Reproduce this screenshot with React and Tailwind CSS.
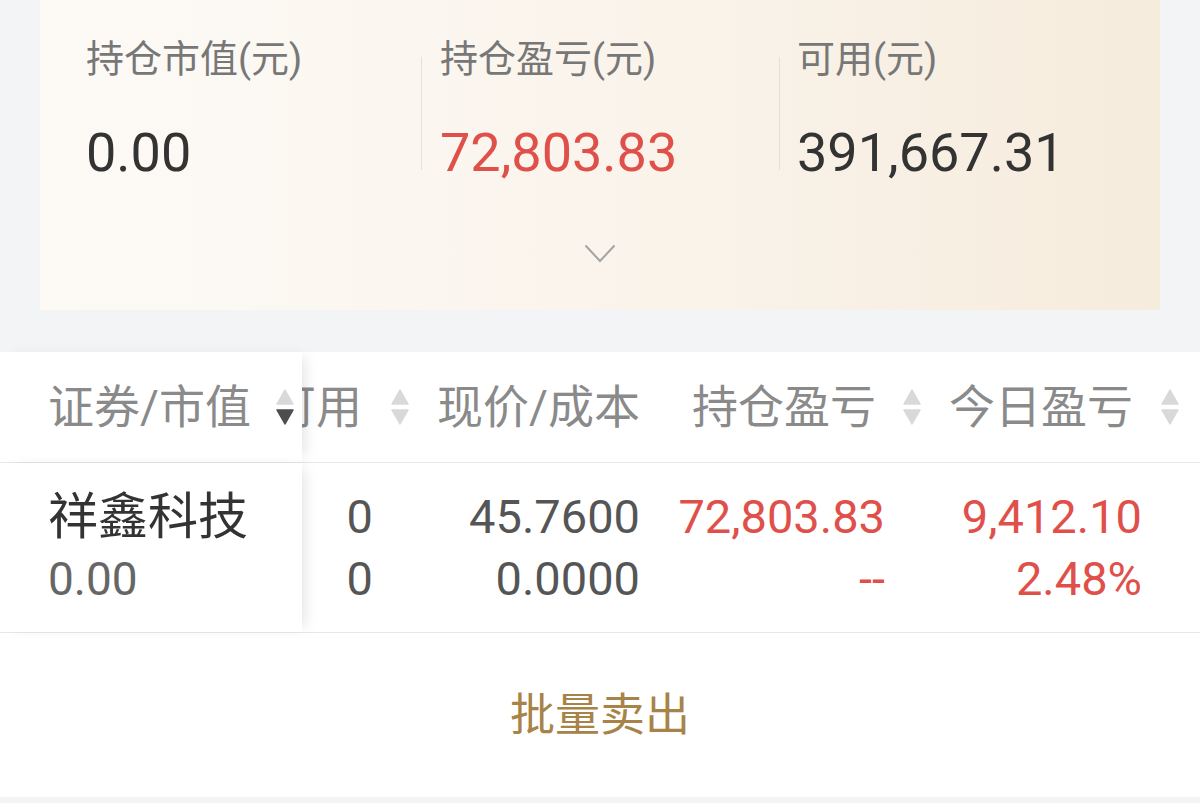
import React from 'react'

const SortIcon = ({ active }) => (
  <svg width="20" height="38" viewBox="0 0 20 38" className="shrink-0">
    <path d="M10 2 L18 16 L2 16 Z" fill="#d9d9d9" strokeLinejoin="round" stroke="#d9d9d9" strokeWidth="1.5" />
    <path
      d="M2 22 L18 22 L10 36 Z"
      fill={active ? '#4d4d4d' : '#d9d9d9'}
      stroke={active ? '#4d4d4d' : '#d9d9d9'}
      strokeLinejoin="round"
      strokeWidth="1.5"
    />
  </svg>
)

const App = () => {
  const summary = [
    { label: '持仓市值(元)', value: '0.00', red: false },
    { label: '持仓盈亏(元)', value: '72,803.83', red: true },
    { label: '可用(元)', value: '391,667.31', red: false }
  ]

  return (
    <div className="w-[1200px] h-[803px] overflow-hidden bg-[#f3f4f6] font-['Roboto','Noto_Sans_CJK_SC',sans-serif]">
      {/* Asset card */}
      <div className="mx-10 h-[310px] bg-gradient-to-r from-[#fdfaf6] via-[#faf4ec] to-[#f6ecdd] pt-10 pl-[46px]">
        <div className="flex">
          {summary.map((item, i) => (
            <div key={item.label} className="flex">
              {i > 0 && <div className="w-px h-[113px] mt-[17px] bg-[#e6e0d6]" />}
              <div className={i === 0 ? 'w-[335px]' : i === 1 ? 'w-[357px] pl-[18px]' : 'pl-[17px]'}>
                <div className="text-[38px] leading-[38px] text-[#777]">{item.label}</div>
                <div
                  className={`mt-[48px] text-[54px] leading-none ${
                    item.red ? 'text-[#e0504b]' : 'text-[#333]'
                  }`}
                >
                  {item.value}
                </div>
              </div>
            </div>
          ))}
        </div>
        <div className="flex justify-center mt-[64px] -ml-[46px]">
          <svg width="32" height="19" viewBox="0 0 32 19" fill="none">
            <path d="M1.5 1.5 L16 17 L30.5 1.5" stroke="#a3a3a3" strokeWidth="2" />
          </svg>
        </div>
      </div>

      {/* Holdings table */}
      <div className="mt-[42px] bg-white">
        {/* Header */}
        <div className="flex h-[111px] border-b border-[#e8e8e8] text-[46px] text-[#8a8a8a]">
          <div className="relative z-10 w-[302px] shrink-0 flex items-center pl-12 bg-white shadow-[8px_0_14px_-6px_rgba(0,0,0,0.12)]">
            <span className="leading-none whitespace-nowrap">证券/市值</span>
            <span className="ml-[24px] flex"><SortIcon active /></span>
          </div>
          <div className="flex-1 overflow-hidden">
            <div className="flex h-full -ml-[50px]">
              <div className="w-[168px] shrink-0 flex items-center justify-end pr-[10px]">
                <span className="leading-none whitespace-nowrap">可用</span>
                <span className="ml-[28px] flex"><SortIcon /></span>
              </div>
              <div className="w-[240px] shrink-0 flex items-center justify-end pr-5">
                <span className="leading-none whitespace-nowrap">现价/成本</span>
              </div>
              <div className="w-[270px] shrink-0 flex items-center justify-end pr-2">
                <span className="leading-none whitespace-nowrap">持仓盈亏</span>
                <span className="ml-[26px] flex"><SortIcon /></span>
              </div>
              <div className="w-[270px] shrink-0 flex items-center justify-end pr-5">
                <span className="leading-none whitespace-nowrap">今日盈亏</span>
                <span className="ml-[27px] flex"><SortIcon /></span>
              </div>
            </div>
          </div>
        </div>

        {/* Row */}
        <div className="flex h-[170px] border-b border-[#e8e8e8] leading-[62px]">
          <div className="relative z-10 w-[302px] shrink-0 pl-12 pt-[23px] bg-white shadow-[8px_0_14px_-6px_rgba(0,0,0,0.12)]">
            <div className="text-[50px] text-[#333]">祥鑫科技</div>
            <div className="text-[46px] text-[#666]">0.00</div>
          </div>
          <div className="flex-1 overflow-hidden">
            <div className="flex h-full -ml-[50px] pt-[23px] text-[47px]">
              <div className="w-[168px] shrink-0 text-right pr-[47px] text-[#555]">
                <div>0</div>
                <div>0</div>
              </div>
              <div className="w-[240px] shrink-0 text-right pr-5 text-[#555]">
                <div>45.7600</div>
                <div>0.0000</div>
              </div>
              <div className="w-[270px] shrink-0 text-right pr-[45px] text-[#e0504b]">
                <div>72,803.83</div>
                <div>--</div>
              </div>
              <div className="w-[270px] shrink-0 text-right pr-[58px] text-[#e0504b]">
                <div>9,412.10</div>
                <div>2.48%</div>
              </div>
            </div>
          </div>
        </div>

        {/* Batch sell */}
        <div className="h-[164px] flex items-center justify-center">
          <span className="text-[45px] leading-none text-[#a88347]">批量卖出</span>
        </div>
      </div>
    </div>
  )
}

export default App
